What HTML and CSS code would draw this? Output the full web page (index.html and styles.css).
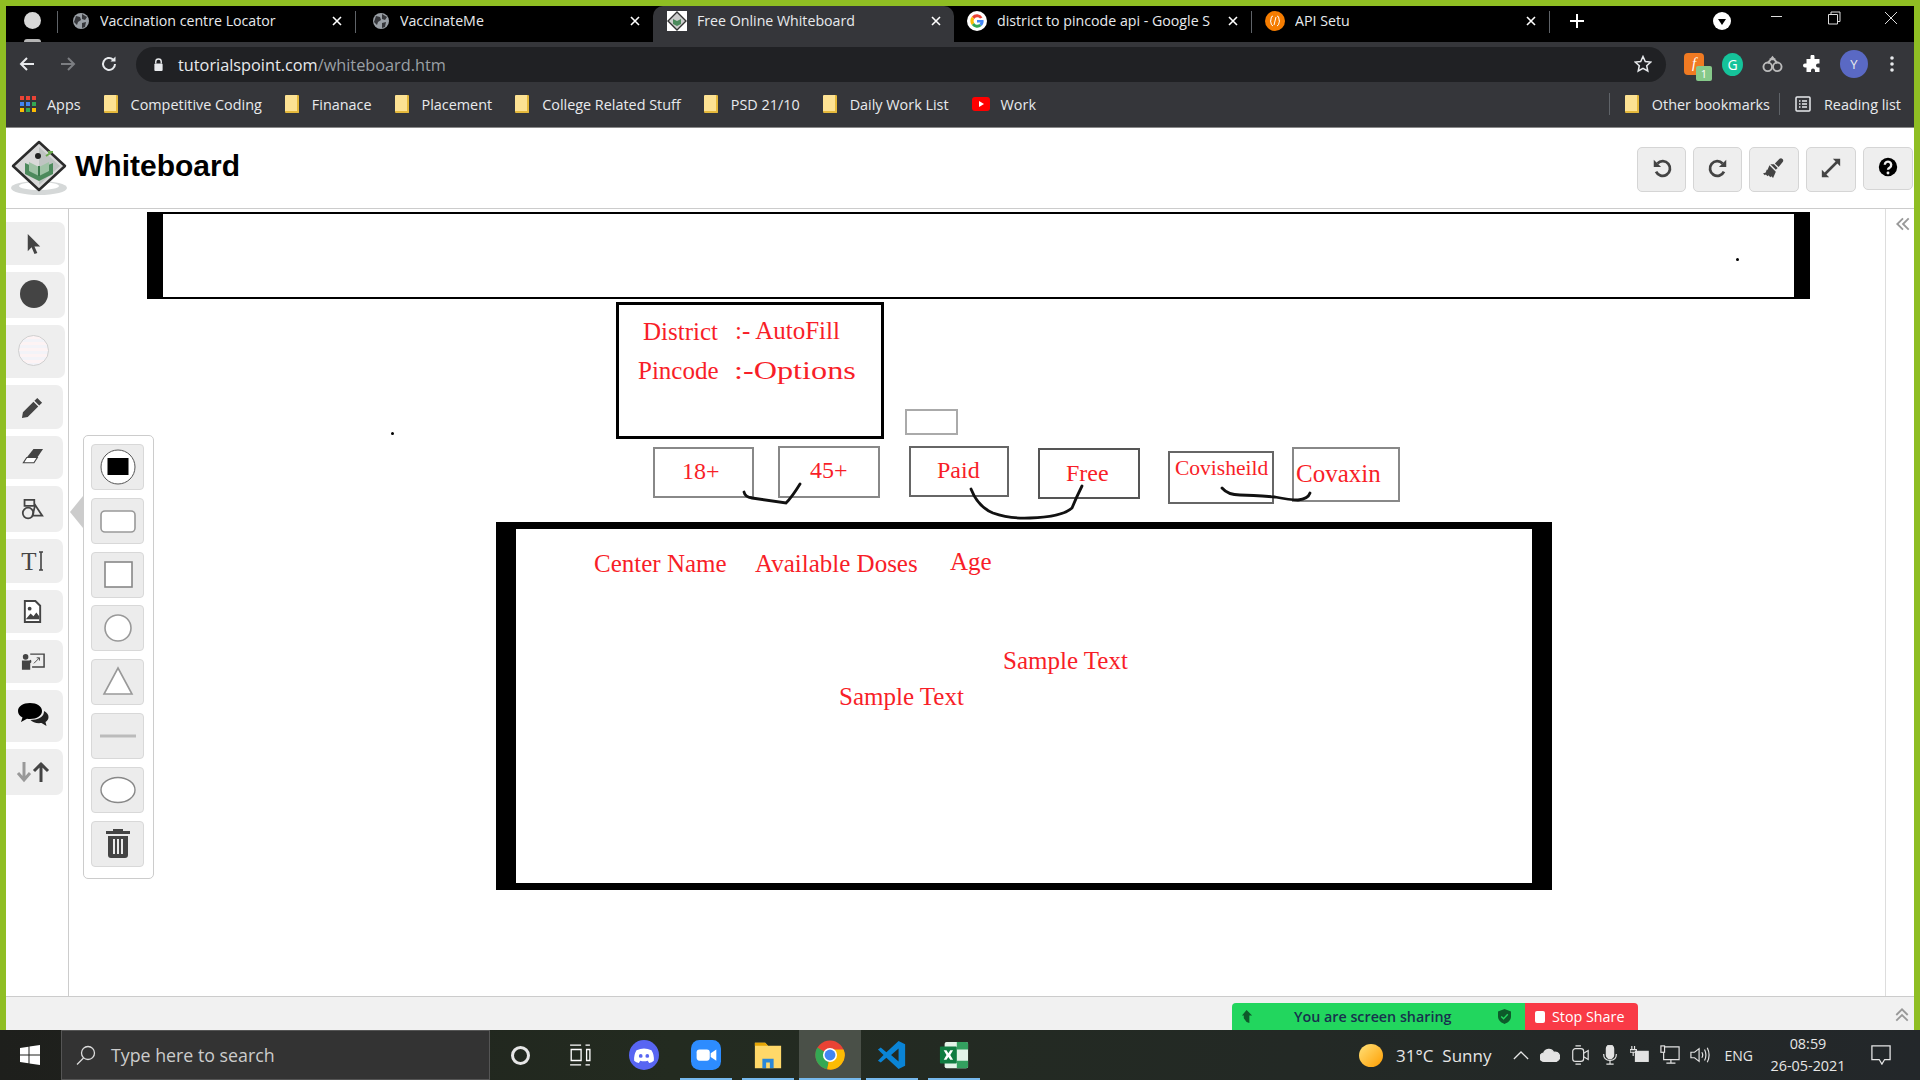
FILE: index.html
```html
<!DOCTYPE html>
<html>
<head>
	<meta charset="utf-8">
	<title>Free Online Whiteboard</title>
	<link rel="stylesheet" href="styles.css">
</head>
<body>
<div class="window">
	<!-- tab strip -->
	<div class="tabs">
		<div class="profile"><span class="prof-dot"></span><span class="prof-stub"></span></div>
		<div class="tab sep">
			<svg class="fav" viewBox="0 0 16 16"><circle cx="8" cy="8" r="8" fill="#9aa0a6"/><path d="M3 3l4 1 1 3-3 2-1 3-3-3zM9 1l5 3-2 3-3-1zM9 10l4-1-1 5-3 1z" fill="#35363a"/></svg>
			<span class="tab-title">Vaccination centre Locator</span>
			<svg class="tab-x" viewBox="0 0 10 10"><path d="M1 1l8 8M9 1l-8 8"/></svg>
		</div>
		<div class="tab sep pad-18">
			<svg class="fav" viewBox="0 0 16 16"><circle cx="8" cy="8" r="8" fill="#9aa0a6"/><path d="M3 3l4 1 1 3-3 2-1 3-3-3zM9 1l5 3-2 3-3-1zM9 10l4-1-1 5-3 1z" fill="#35363a"/></svg>
			<span class="tab-title">VaccinateMe</span>
			<svg class="tab-x" viewBox="0 0 10 10"><path d="M1 1l8 8M9 1l-8 8"/></svg>
		</div>
		<div class="tab active">
			<svg class="fav fav-big" viewBox="0 0 20 20"><rect width="20" height="20" fill="#fff"/><path d="M10 1l9 9-9 9-9-9z" fill="#ccc" stroke="#333" stroke-width="1.4"/><path d="M6 8l4 2 4-2v5l-4 2-4-2z" fill="#4c8a5c"/></svg>
			<span class="tab-title">Free Online Whiteboard</span>
			<svg class="tab-x" viewBox="0 0 10 10"><path d="M1 1l8 8M9 1l-8 8"/></svg>
		</div>
		<div class="tab narrow">
			<svg class="fav fav-big" viewBox="0 0 20 20"><circle cx="10" cy="10" r="10" fill="#fff"/><path d="M15.5 6.5A6.5 6.5 0 0 0 5 5.5L7.2 8A3.5 3.5 0 0 1 13 7.5z" fill="#ea4335"/><path d="M5 5.500A6.500 6.500 0 0 0 4.800 14L7.200 12A3.500 3.500 0 0 1 7.200 8z" fill="#fbbc05"/><path d="M4.800 14A6.500 6.500 0 0 0 14.500 15L12.500 13A3.500 3.500 0 0 1 7.200 12z" fill="#34a853"/><path d="M14.500 15A6.500 6.500 0 0 0 16.500 9H10V11.500H13.500A3.500 3.500 0 0 1 12.500 13z" fill="#4285f4"/></svg>
			<span class="tab-title">district to pincode api - Google S</span>
			<svg class="tab-x" viewBox="0 0 10 10"><path d="M1 1l8 8M9 1l-8 8"/></svg>
		</div>
		<div class="tab sep">
			<svg class="fav fav-big" viewBox="0 0 20 20"><circle cx="10" cy="10" r="10" fill="#f57c00"/><path d="M8 5Q6 5 6 8t-1 2q1 0 1 2t2 3M12 5q2 0 2 3t1 2q-1 0-1 2t-2 3M11 6l-2 8" fill="none" stroke="#fff" stroke-width="1"/></svg>
			<span class="tab-title">API Setu</span>
			<svg class="tab-x" viewBox="0 0 10 10"><path d="M1 1l8 8M9 1l-8 8"/></svg>
		</div>
		<div class="new-tab"><svg viewBox="0 0 14 14"><path d="M7 0v14M0 7h14"/></svg></div>
		<div class="win-ctrls">
			<svg class="win-down" viewBox="0 0 18 18"><circle cx="9" cy="9" r="9" fill="#fff"/><path d="M5 7h8l-4 6z" fill="#000"/></svg>
			<svg class="win-btn" viewBox="0 0 14 14"><path d="M1 5.500h11"/></svg>
			<svg class="win-btn" viewBox="0 0 14 14"><path d="M1.500 3.500h9v9.500h-9zM4 3.500V1h9v9.500h-2.500"/></svg>
			<svg class="win-btn" viewBox="0 0 14 14"><path d="M1 1l12 12M13 1L1 13"/></svg>
		</div>
	</div>

	<!-- address bar -->
	<div class="toolbar">
		<svg class="nav-ic" viewBox="0 0 18 18"><path d="M16 9H3M9 3L3 9l6 6"/></svg>
		<svg class="nav-ic dim" viewBox="0 0 18 18"><path d="M2 9h13M9 3l6 6-6 6"/></svg>
		<svg class="nav-ic" viewBox="0 0 18 18"><path d="M15 9a6 6 0 1 1-2-4.500"/><path class="solid" d="M15.500 1.500v5h-5z"/></svg>
		<div class="omnibox">
			<svg class="lock" viewBox="0 0 12 14"><path d="M3 6V4a3 3 0 0 1 6 0v2" fill="none" stroke="#e8eaed" stroke-width="1.500"/><rect x="1.500" y="6" width="9" height="8" rx="1" fill="#e8eaed"/></svg>
			<span class="url">tutorialspoint.com<span class="url-path">/whiteboard.htm</span></span>
			<svg class="star" viewBox="0 0 18 18"><path d="M9 1.500l2.300 5 5.400.6-4 3.600 1.100 5.300L9 13.300 4.200 16l1.100-5.300-4-3.600 5.400-.6z"/></svg>
		</div>
		<div class="exts">
			<div class="ext-f"><span class="ext-f-glyph">f</span><span class="ext-badge">1</span></div>
			<div class="ext-g">G</div>
			<svg class="ext-ic" viewBox="0 0 22 18"><circle cx="6" cy="12" r="4.500" fill="none" stroke="#bbb" stroke-width="2"/><circle cx="16" cy="12" r="4.500" fill="none" stroke="#bbb" stroke-width="2"/><path d="M6 8l5-6 5 6M8 4h6" fill="none" stroke="#bbb" stroke-width="2"/></svg>
			<svg class="ext-ic" viewBox="0 0 18 18"><path d="M7 1.500a2 2 0 0 1 4 0V4h5v4.500h-1.500a2 2 0 0 0 0 4H16V17h-4.500v-1.500a2 2 0 0 0-4 0V17H3v-4.500H1.500a2 2 0 0 1 0-4H3V4h4z" fill="#fff"/></svg>
			<div class="avatar">Y</div>
			<svg class="ext-dots" viewBox="0 0 4 18"><circle cx="2" cy="3" r="1.800"/><circle cx="2" cy="9" r="1.800"/><circle cx="2" cy="15" r="1.800"/></svg>
		</div>
	</div>

	<!-- bookmarks -->
	<div class="bookmarks">
		<div class="bm"><svg class="apps" viewBox="0 0 16 16"><path fill="#ea4335" d="M0 0h4v4H0zM6 0h4v4H6zM12 0h4v4h-4z"/><path fill="#4285f4" d="M0 6h4v4H0zM6 6h4v4H6z"/><path fill="#34a853" d="M12 6h4v4h-4zM6 12h4v4H6z"/><path fill="#fbbc05" d="M0 12h4v4H0zM12 12h4v4h-4z"/></svg>Apps</div>
		<div class="bm"><span class="folder"></span>Competitive Coding</div>
		<div class="bm"><span class="folder"></span>Finanace</div>
		<div class="bm"><span class="folder"></span>Placement</div>
		<div class="bm"><span class="folder"></span>College Related Stuff</div>
		<div class="bm"><span class="folder"></span>PSD 21/10</div>
		<div class="bm"><span class="folder"></span>Daily Work List</div>
		<div class="bm"><svg class="yt" viewBox="0 0 18 14"><rect width="18" height="14" rx="3" fill="#f00"/><path d="M7 4l5 3-5 3z" fill="#fff"/></svg>Work</div>
		<div class="bm-right">
			<div class="bm bm-div"><span class="folder"></span>Other bookmarks</div>
			<div class="bm bm-div"><svg class="reading" viewBox="0 0 16 16"><rect x="1" y="1" width="14" height="14" rx="1" fill="none" stroke="#e8eaed" stroke-width="1.500"/><path d="M4 5h1.500M7 5h5M4 8h1.500M7 8h5M4 11h1.500M7 11h5" stroke="#e8eaed" stroke-width="1.300"/></svg>Reading list</div>
		</div>
	</div>

	<!-- whiteboard app -->
	<div class="app-head">
		<svg class="logo" viewBox="0 0 58 58">
			<ellipse cx="29" cy="49" rx="28" ry="7" fill="#d5d8d8"/><ellipse cx="29" cy="47" rx="20" ry="4" fill="#fff"/>
			<path d="M29 3l26 24-26 24L3 27z" fill="#d9d9d9" stroke="#2c2c2c" stroke-width="2.500" stroke-linejoin="round"/>
			<path d="M29 8L50 27 29 46z" fill="#bfc4c2"/>
			<circle cx="28" cy="17" r="3" fill="#222"/>
			<path d="M15 24l14 6 14-6v11l-14 7-14-7z" fill="#4c8a5c"/><path d="M19 23l10 5 10-5v9l-10 5-10-5z" fill="#9fc3a6"/><path d="M29 27v10" stroke="#3b7a4c" stroke-width="2"/>
			<path d="M36 17l6-4M38 13h5" stroke="#6aa84f" stroke-width="2"/>
		</svg>
		<div class="app-title">Whiteboard</div>
		<div class="head-btns">
			<div class="hbtn"><svg class="hic" viewBox="0 0 24 24"><path class="ln" d="M7 7a8 8 0 1 1-1.500 9"/><path d="M3 3v8h8z"/></svg></div>
			<div class="hbtn"><svg class="hic" viewBox="0 0 24 24"><path class="ln" d="M17 7a8 8 0 1 0 1.500 9"/><path d="M21 3v8h-8z"/></svg></div>
			<div class="hbtn wide"><svg class="hic" viewBox="0 0 24 24"><path d="M18 2a2.500 2.500 0 0 1 3.500 3.500L17 11l-4-4zM12 8l4 4-2 2-6-6zM7 9l7 7-3 7-2-2-1 1-2-2-1 1-2-2-1 1-2-2 3-1 1-3 1 0z"/></svg></div>
			<div class="hbtn wide"><svg class="hic" viewBox="0 0 24 24"><path d="M14 2h8v8l-3-3L7 19l3 3H2v-8l3 3L17 5z"/></svg></div>
			<div class="hbtn wide short"><svg class="hic" viewBox="0 0 24 24"><circle cx="12" cy="12" r="10" fill="#000"/><path d="M8.500 9.500a3.500 3.500 0 1 1 5.500 3c-1.300.8-2 1.300-2 2.500" fill="none" stroke="#eee" stroke-width="2.600"/><circle cx="12" cy="18.500" r="1.600" fill="#eee"/></svg></div>
		</div>
	</div>

	<div class="app-body">
		<div class="side">
			<div class="sbtn h43 wider"><svg class="sic" viewBox="0 0 24 24"><path d="M6 2l13 13h-6l3 7-3 1-3-7-4 4z"/></svg></div>
			<div class="sbtn h46 wider"><span class="dot-dark"></span></div>
			<div class="sbtn h53 wider"><span class="dot-light"></span></div>
			<div class="sbtn h44"><svg class="sic" viewBox="0 0 24 24"><path d="M17 2l5 5-3 3-5-5zM13 6l5 5L7 22l-6 1 1-6z"/></svg></div>
			<div class="sbtn h43"><svg class="sic" viewBox="0 0 24 24"><path d="M13 3h10l-6 9H6z"/><path d="M6 12h11l-3.500 5.500H2.500z" fill="#fff" stroke="#444" stroke-width="1.200"/></svg></div>
			<div class="sbtn h46"><svg class="sic" viewBox="0 0 26 26"><g fill="none" stroke="#444" stroke-width="2"><path d="M4 2h11v7H4z"/><path d="M16 8l8 12H13z"/><circle cx="8" cy="17" r="6"/></g></svg></div>
			<div class="sbtn h44"><span class="t-tool">T</span><svg class="t-cursor" viewBox="0 0 6 20"><path d="M3 1v18M1 1h4M1 19h4" stroke="#444" stroke-width="1.600"/></svg></div>
			<div class="sbtn h43"><svg class="sic" viewBox="0 0 20 24"><path d="M2 1h11l5 5v17H2z" fill="#fff" stroke="#444" stroke-width="2"/><circle cx="7" cy="9" r="2" fill="#444"/><path d="M3 20l5-6 3 3 3-4 3 4v3z" fill="#444"/></svg></div>
			<div class="sbtn h43"><svg class="sic-board" viewBox="0 0 26 18"><circle cx="5" cy="4" r="3" fill="#444"/><path d="M1 8h8l4-2 1 2-4 3v7H1z" fill="#444"/><path d="M10 1h15v14H12" fill="#eee" stroke="#444" stroke-width="1.600"/><path d="M14 11l6-6M17 5h3v3" fill="none" stroke="#444"/></svg></div>
			<div class="sbtn h52"><svg class="sic-chat" viewBox="0 0 32 28"><path d="M13 1c7 0 12 3.500 12 8s-5 8-12 8c-1 0-2 0-3-.2L4 20l1.500-4.500C2.500 14 1 11.700 1 9c0-4.500 5-8 12-8z" fill="#000"/><path d="M27 9c3 1.500 4.500 3.500 4.500 6 0 2-1 3.800-3 5l1 4-5-3c-5 .5-9-.5-11-3 7 0 14-3 13.500-9z" fill="#222"/></svg></div>
			<div class="sbtn h46"><svg class="sic-wide" viewBox="0 0 34 22"><path d="M8 1v17M2 12l6 7 6-7" fill="none" stroke="#999" stroke-width="3"/><path d="M25 21V3M18 10l7-7 7 7" fill="none" stroke="#444" stroke-width="3"/></svg></div>
		</div>

		<div class="canvas">
			<div class="shape banner"></div>
			<span class="speck speck-a"></span>
			<span class="speck speck-b"></span>

			<div class="shape district"></div>
			<span class="ink txt-district">District</span>
			<span class="ink txt-autofill">:- AutoFill</span>
			<span class="ink txt-pincode">Pincode</span>
			<span class="ink txt-options">:-Options</span>

			<div class="shape small-box"></div>
			<div class="shape box-18"></div>
			<div class="shape box-45"></div>
			<div class="shape box-paid"></div>
			<div class="shape box-free"></div>
			<div class="shape box-covi"></div>
			<div class="shape box-cova"></div>
			<span class="ink txt-18">18+</span>
			<span class="ink txt-45">45+</span>
			<span class="ink txt-paid">Paid</span>
			<span class="ink txt-free">Free</span>
			<span class="ink txt-covi">Covisheild</span>
			<span class="ink txt-cova">Covaxin</span>

			<div class="shape results"></div>
			<span class="ink txt-center">Center Name</span>
			<span class="ink txt-doses">Available Doses</span>
			<span class="ink txt-age">Age</span>
			<span class="ink txt-sample1">Sample Text</span>
			<span class="ink txt-sample2">Sample Text</span>

			<svg class="scribbles" viewBox="69 209 1816 788">
				<path d="M744 492Q745 497 752 498T786 503Q792 497 800 484"/>
				<path d="M971 489Q978 507 993 513Q1010 519 1030 518Q1062 517 1072 508Q1076 498 1082 486"/>
				<path d="M1222 488Q1228 495 1240 495T1275 497Q1290 500 1298 500Q1308 499 1310 493"/>
			</svg>

			<!-- shape picker -->
			<div class="picker-arrow"></div>
			<div class="picker">
				<div class="pbtn"><svg class="pic" viewBox="0 0 36 36"><circle cx="18" cy="18" r="17" fill="#fff" stroke="#555"/><rect x="7.500" y="9" width="21" height="17" fill="#000"/></svg></div>
				<div class="pbtn"><svg class="pic" viewBox="0 0 36 36"><rect x="1" y="8" width="34" height="21" rx="4" fill="#fff" stroke="#999" stroke-width="1.600"/></svg></div>
				<div class="pbtn"><svg class="pic" viewBox="0 0 36 36"><rect x="5" y="5" width="27" height="25" fill="#fff" stroke="#888" stroke-width="1.600"/></svg></div>
				<div class="pbtn"><svg class="pic" viewBox="0 0 36 36"><circle cx="18" cy="18" r="13" fill="#fff" stroke="#999" stroke-width="1.600"/></svg></div>
				<div class="pbtn"><svg class="pic" viewBox="0 0 36 36"><path d="M18 4l14 26H4z" fill="#fff" stroke="#999" stroke-width="1.600"/></svg></div>
				<div class="pbtn"><svg class="pic" viewBox="0 0 36 36"><path d="M0 18h36" stroke="#bbb" stroke-width="3"/></svg></div>
				<div class="pbtn"><svg class="pic" viewBox="0 0 36 36"><ellipse cx="18" cy="18" rx="17" ry="12.500" fill="#fff" stroke="#888" stroke-width="1.400"/></svg></div>
				<div class="pbtn"><svg class="pic" viewBox="0 0 36 36"><path d="M13 5V3h10v2h7v3H6V5zM8 10h20v19q0 3-3 3H11q-3 0-3-3zM13 13v15h2V13zM17 13v15h2V13zM21 13v15h2V13z" fill="#444" fill-rule="evenodd"/></svg></div>
			</div>
		</div>

		<div class="collapse-side"><svg class="chev" viewBox="0 0 14 14"><path d="M7 2L2 7l5 5M12 2L7 7l5 5"/></svg></div>
	</div>

	<div class="app-foot">
		<div class="share">
			<div class="share-green">
				<svg class="share-arrow" viewBox="0 0 14 14"><path d="M6 0l6 6H9v8l-3-1-3-4V6H1z"/></svg>
				<span class="share-text">You are screen sharing</span>
				<svg class="share-shield" viewBox="0 0 14 16"><path d="M7 0l7 2.500V8c0 4-3 6.500-7 8-4-1.500-7-4-7-8V2.500z"/><path d="M3.500 8l2.500 2.500 4.500-5" fill="none" stroke="#22d65e" stroke-width="1.500"/></svg>
			</div>
			<div class="share-red"><span class="stop-sq"></span>Stop Share</div>
		</div>
		<svg class="chev foot-chev" viewBox="0 0 14 14"><path d="M2 7l5-5 5 5M2 12l5-5 5 5"/></svg>
	</div>
</div>

<!-- windows taskbar -->
<div class="taskbar">
	<div class="start"><svg viewBox="0 0 20 20"><path d="M0 3l8.500-1.300V9.500H0zM9.500 1.500L20 0v9.500H9.500zM0 10.500h8.500v7.800L0 17zM9.500 10.500H20V20l-10.500-1.500z" fill="#fff"/></svg></div>
	<div class="search">
		<svg class="search-ic" viewBox="0 0 20 20"><circle cx="12" cy="8" r="6.500"/><path d="M7.500 13L1 19.500"/></svg>
		<span>Type here to search</span>
	</div>
	<div class="tb-cell sys"><span class="cortana"></span></div>
	<div class="tb-cell sys"><svg class="taskview" viewBox="0 0 20 20"><path d="M1 1h10M1 19h10M2 5h9v10H2zM15 1h4M15 19h4M16 5h3v10h-3z" fill="none" stroke="#fff" stroke-width="1.200"/></svg></div>
	<div class="tb-cell"><svg class="app-ic" viewBox="0 0 32 32"><circle cx="16" cy="16" r="16" fill="#5865f2"/><path d="M8 11q8-4 16 0 3 5 2.500 11-2 2-5 2.500l-1.500-2.500q-4 1.500-8 0L10.500 24.500q-3-.5-5-2.500Q5 16 8 11z" fill="#fff"/><circle cx="12.500" cy="17" r="2" fill="#5865f2"/><circle cx="19.500" cy="17" r="2" fill="#5865f2"/></svg></div>
	<div class="tb-cell run"><svg class="app-ic" viewBox="0 0 32 32"><rect width="32" height="32" rx="9" fill="#2d8cff"/><rect x="6" y="10" width="14" height="12" rx="3" fill="#fff"/><path d="M21 14l6-4v12l-6-4z" fill="#fff"/></svg></div>
	<div class="tb-cell run"><svg class="app-ic" viewBox="0 0 32 32"><path d="M2 3h11l3 3h14v24H2z" fill="#ffd869"/><path d="M2 3h11l3 3H2z" fill="#e5a505"/><path d="M10 20h12v10H10z" fill="#2b88d8"/><path d="M14 24h4v6h-4z" fill="#ffd869"/></svg></div>
	<div class="tb-cell run open"><svg class="app-ic" viewBox="0 0 32 32"><circle cx="16" cy="16" r="15.500" fill="#ea4335"/><path d="M16 16L2.500 8A15.500 15.500 0 0 0 13 31.200z" fill="#34a853"/><path d="M16 16l-3 15.200A15.500 15.500 0 0 0 30.500 10H16z" fill="#fbbc05"/><circle cx="16" cy="16" r="7.500" fill="#fff"/><circle cx="16" cy="16" r="5.800" fill="#4285f4"/></svg></div>
	<div class="tb-cell run"><svg class="app-ic" viewBox="0 0 32 32"><path d="M23 1l7 3.500v23L23 31 10 19l-6 5-3-2 6-6-6-6 3-2 6 5zM23 9l-8 7 8 7z" fill="#0a84d6" fill-rule="evenodd"/></svg></div>
	<div class="tb-cell run"><svg class="app-ic" viewBox="0 0 32 32"><rect x="6" y="2" width="25" height="28" rx="2" fill="#e3f3e8"/><path d="M19 2h10q2 0 2 2v6H19zM19 22h12v6q0 2-2 2H19z" fill="#33a05f"/><rect x="1" y="7" width="18" height="18" rx="1" fill="#107c41"/><path d="M5 11l3 5-3 5h3l2-3 2 3h3l-3-5 3-5h-3l-2 3-2-3z" fill="#fff"/></svg></div>

	<div class="tray">
		<span class="sun"></span>
		<span class="weather">31°C&nbsp; Sunny</span>
		<svg class="tray-up" viewBox="0 0 18 10"><path d="M1 9l8-8 8 8"/></svg>
		<svg class="tray-ic" viewBox="0 0 22 16"><path d="M5 15a4.500 4.500 0 0 1-1-9 6 6 0 0 1 11-1 5 5 0 0 1 3 10z" fill="#e3e3e3"/></svg>
		<svg class="tray-ic" viewBox="0 0 22 22"><rect x="3" y="4" width="12" height="14" rx="3"/><path d="M15 9l5-3v10l-5-3M6 1h6M6 21h6"/></svg>
		<svg class="tray-ic" viewBox="0 0 22 22"><rect x="7" y="0" width="8" height="15" rx="4" fill="#e3e3e3"/><path d="M4 10q0 7 7 7t7-7M11 17v4M7 21h8"/></svg>
		<svg class="tray-ic" viewBox="0 0 22 22"><path d="M2 1v4M5 1v4M0 5h7v3H0zM3.500 8v4"/><rect x="6" y="7" width="14" height="11" fill="#e3e3e3"/></svg>
		<svg class="tray-ic" viewBox="0 0 22 22"><path d="M4 2h17v14H4zM12 16v4M7 20h10"/><rect x="1" y="1" width="4" height="7" fill="#222"/></svg>
		<svg class="tray-ic" viewBox="0 0 22 22"><path d="M1 8h4l5-4v14l-5-4H1zM13 8q2 3 0 6M16 5q3 6 0 12M19 3q4 8 0 16"/></svg>
		<span class="lang">ENG</span>
		<div class="clock"><span>08:59</span><span>26-05-2021</span></div>
		<svg class="notif" viewBox="0 0 22 22"><path d="M1 1h20v15h-6l-3 5-3-5H1z"/></svg>
	</div>
</div>
</body>
</html>
```

FILE: styles.css
```css
* {
	box-sizing: border-box;
}
html, body {
	margin: 0;
	height: 1080px;
	overflow: hidden;
}
body {
	font-family: "Open Sans", "Liberation Sans", sans-serif;
	display: flex;
	flex-direction: column;
	background: #000;
}
svg {
	display: block;
	flex: none;
}

.window {
	flex: 1;
	min-height: 0;
	display: flex;
	flex-direction: column;
	padding: 6px 6px 0;
	background: #8fbe23;
}

/* tab strip */
.tabs {
	height: 36px;
	display: flex;
	background: #000;
	color: #e8eaed;
	font-size: 14.2px;
	flex: none;
}
.profile {
	width: 51px;
	flex: none;
	position: relative;
}
.prof-dot {
	position: absolute;
	left: 18px;
	top: 6px;
	width: 17px;
	height: 17px;
	border-radius: 50%;
	background: #d8d8d8;
}
.prof-stub {
	position: absolute;
	left: 18px;
	bottom: 0;
	width: 17px;
	height: 3px;
	border-radius: 3px 3px 0 0;
	background: #b5b5b5;
}
.tab {
	width: 298px;
	flex: none;
	display: flex;
	align-items: center;
	padding: 0 13px 7px 16px;
	position: relative;
}
.tab.pad-18 {
	padding-left: 18px;
}
.tab.sep::before {
	content: "";
	position: absolute;
	left: 0;
	top: 5px;
	height: 22px;
	border-left: 1px solid #5f6368;
}
.tab.active {
	width: 301px;
	background: #35363a;
	border-radius: 10px 10px 0 0;
}
.tab.narrow {
	width: 297px;
	padding-left: 15px;
}
.fav {
	width: 16px;
	height: 16px;
	margin-right: 11px;
}
.fav-big {
	width: 20px;
	height: 20px;
	margin-left: -2px;
	margin-right: 10px;
}
.tab-title {
	flex: 1;
	white-space: nowrap;
	overflow: hidden;
}
.tab-x {
	width: 10px;
	height: 10px;
	margin-left: 8px;
	stroke: #fff;
	stroke-width: 1.6;
}
.new-tab {
	width: 56px;
	flex: none;
	display: flex;
	align-items: center;
	justify-content: center;
	position: relative;
	padding-bottom: 6px;
}
.new-tab::before {
	content: "";
	position: absolute;
	left: 0;
	top: 5px;
	height: 22px;
	border-left: 1px solid #5f6368;
}
.new-tab svg {
	width: 14px;
	height: 14px;
	stroke: #fff;
	stroke-width: 2;
}
.win-ctrls {
	display: flex;
	align-items: center;
	margin-left: 108px;
	padding-bottom: 6px;
}
.win-down {
	width: 18px;
	height: 18px;
	margin-right: 39px;
}
.win-btn {
	width: 14px;
	height: 14px;
	margin-right: 43px;
	margin-top: -6px;
	stroke: #ddd;
	fill: none;
	stroke-width: 1;
}
.win-btn:last-child {
	margin-right: 0;
}

/* address bar */
.toolbar {
	height: 44px;
	flex: none;
	display: flex;
	align-items: center;
	background: #35363a;
	padding-left: 12px;
}
.nav-ic {
	width: 18px;
	height: 18px;
	margin-right: 23px;
	fill: none;
	stroke: #e8eaed;
	stroke-width: 2;
}
.nav-ic.dim {
	stroke: #7c7e82;
}
.nav-ic .solid {
	fill: #e8eaed;
	stroke: none;
}
.nav-ic:nth-child(3) {
	margin-right: 18px;
}
.omnibox {
	width: 1530px;
	height: 35px;
	flex: none;
	display: flex;
	align-items: center;
	background: #202124;
	border-radius: 18px;
	padding: 0 14px 0 17px;
}
.lock {
	width: 11px;
	height: 13px;
	margin-right: 14px;
}
.url {
	flex: 1;
	font-size: 16.3px;
	color: #e8eaed;
	white-space: nowrap;
	padding-top: 1px;
}
.url-path {
	color: #9aa0a6;
}
.star {
	width: 18px;
	height: 18px;
	fill: none;
	stroke: #e8eaed;
	stroke-width: 1.500;
}
.exts {
	display: flex;
	align-items: center;
	padding-left: 18px;
}
.ext-f {
	width: 20px;
	height: 22px;
	background: #f07a22;
	border-radius: 4px;
	position: relative;
	text-align: center;
	color: #fff;
	font-family: "Liberation Serif", serif;
	font-style: italic;
	font-size: 15px;
	line-height: 20px;
}
.ext-badge {
	position: absolute;
	left: 12px;
	top: 13px;
	width: 16px;
	height: 15px;
	background: #86c98a;
	border-radius: 2px;
	color: #fff;
	font: 11px/15px "Open Sans", sans-serif;
}
.ext-g {
	width: 21px;
	height: 23px;
	border-radius: 50%;
	margin-left: 18px;
	background: #15c39a;
	color: #fff;
	font-size: 14px;
	line-height: 23px;
	text-align: center;
}
.ext-ic {
	width: 21px;
	height: 18px;
	margin-left: 19px;
}
.avatar {
	width: 28px;
	height: 28px;
	border-radius: 50%;
	margin-left: 17px;
	background: #5a69c4;
	color: #e8eaed;
	font-size: 13px;
	line-height: 28px;
	text-align: center;
}
.ext-dots {
	width: 4px;
	height: 18px;
	margin-left: 22px;
	fill: #e8eaed;
}

/* bookmarks */
.bookmarks {
	height: 42px;
	flex: none;
	display: flex;
	align-items: center;
	gap: 23px;
	padding: 0 0 5px 14px;
	background: #35363a;
	border-bottom: 1px solid #8a8a8a;
	color: #e8eaed;
	font-size: 14.4px;
}
.bm {
	display: flex;
	align-items: center;
	white-space: nowrap;
}
.apps {
	width: 16px;
	height: 16px;
	margin-right: 11px;
}
.folder {
	width: 14px;
	height: 18px;
	margin-right: 13px;
	background: #fde293;
	border-right: 2px solid #e5b93c;
	border-bottom: 2px solid #e5b93c;
	border-radius: 1px;
}
.yt {
	width: 18px;
	height: 14px;
	margin-right: 11px;
}
.bm-right {
	margin-left: auto;
	display: flex;
	padding-right: 13px;
}
.bm-div {
	border-left: 1px solid #5f6368;
	height: 22px;
	padding-left: 15px;
}
.bm-div + .bm-div {
	margin-left: 9px;
}
.reading {
	width: 16px;
	height: 16px;
	margin-right: 13px;
}

/* app header */
.app-head {
	height: 81px;
	flex: none;
	display: flex;
	align-items: center;
	background: #fff;
	border-bottom: 1px solid #ccc;
	padding-left: 4px;
}
.logo {
	width: 58px;
	height: 58px;
}
.app-title {
	font-family: "Liberation Sans", sans-serif;
	font-weight: bold;
	font-size: 30px;
	margin-left: 7px;
	margin-top: -4px;
	color: #000;
}
.head-btns {
	margin-left: auto;
	display: flex;
	align-items: flex-start;
	gap: 7px;
	padding-top: 19px;
	align-self: flex-start;
	padding-right: 1px;
}
.hbtn {
	width: 49px;
	height: 45px;
	display: flex;
	align-items: center;
	justify-content: center;
	background: #eee;
	border: 1px solid #d5d5d5;
	border-radius: 5px;
	padding-bottom: 4px;
}
.hbtn.wide {
	width: 50px;
}
.hbtn.short {
	height: 43px;
}
.hic {
	width: 22px;
	height: 22px;
	fill: #444;
}
.hic .ln {
	fill: none;
	stroke: #444;
	stroke-width: 3;
}

/* main area */
.app-body {
	flex: 1;
	min-height: 0;
	display: flex;
	background: #fff;
	border-bottom: 1px solid #ccc;
}
.side {
	width: 63px;
	flex: none;
	display: flex;
	flex-direction: column;
	align-items: flex-start;
	gap: 7px;
	padding-top: 13px;
	border-right: 1px solid #ccc;
}
.sbtn {
	width: 57px;
	display: flex;
	align-items: center;
	justify-content: center;
	background: #eee;
	border-radius: 0 7px 7px 0;
	padding-right: 4px;
}
.sbtn.wider {
	width: 59px;
}
.h43 { height: 43px; }
.h44 { height: 44px; }
.h46 { height: 46px; }
.h52 { height: 52px; }
.h53 { height: 53px; }
.sic {
	width: 23px;
	height: 23px;
	fill: #444;
}
.sic-wide {
	width: 34px;
	height: 22px;
}
.sic-board {
	width: 24px;
	height: 17px;
}
.sic-chat {
	width: 32px;
	height: 28px;
}
.dot-dark {
	width: 28px;
	height: 28px;
	border-radius: 50%;
	background: #444;
	margin-top: -2px;
}
.dot-light {
	width: 31px;
	height: 31px;
	border-radius: 50%;
	background: repeating-linear-gradient(#fdf3f4 0 3px, #f3f3f8 3px 6px);
	border: 1px solid #d0d0d0;
	margin-top: -2px;
}
.t-tool {
	font-family: "Liberation Serif", serif;
	font-size: 25px;
	color: #444;
	line-height: 1;
}
.t-cursor {
	width: 6px;
	height: 20px;
	margin-left: 1px;
}

/* whiteboard drawing, a free canvas: everything sits at its drawn spot */
.canvas {
	flex: 1;
	position: relative;
	overflow: hidden;
}
.shape {
	position: absolute;
	border: 2px solid #777;
	background: #fff;
}
.banner {
	left: 78px;
	top: 3px;
	width: 1663px;
	height: 87px;
	border: solid #000;
	border-width: 2px 16px;
}
.speck {
	position: absolute;
	width: 3px;
	height: 3px;
	background: #000;
	border-radius: 50%;
}
.speck-a { left: 1667px; top: 49px; }
.speck-b { left: 322px; top: 223px; }
.district {
	left: 547px;
	top: 93px;
	width: 268px;
	height: 137px;
	border: 3px solid #000;
}
.small-box { left: 836px; top: 200px; width: 53px; height: 26px; border-color: #aaa; }
.box-18 { left: 584px; top: 238px; width: 101px; height: 51px; border-color: #888; }
.box-45 { left: 709px; top: 237px; width: 102px; height: 52px; border-color: #888; }
.box-paid { left: 840px; top: 237px; width: 100px; height: 51px; border-color: #666; }
.box-free { left: 969px; top: 239px; width: 102px; height: 51px; border-color: #555; }
.box-covi { left: 1099px; top: 242px; width: 106px; height: 53px; border-color: #666; }
.box-cova { left: 1223px; top: 238px; width: 108px; height: 55px; border-color: #888; }
.results {
	left: 427px;
	top: 313px;
	width: 1056px;
	height: 368px;
	border: solid #000;
	border-width: 7px 20px;
}
.ink {
	position: absolute;
	font-family: "Liberation Serif", serif;
	font-size: 25px;
	line-height: 30px;
	color: #f81e28;
	white-space: nowrap;
}
.txt-district { left: 574px; top: 108px; }
.txt-autofill { left: 666px; top: 107px; }
.txt-pincode { left: 569px; top: 147px; }
.txt-options { left: 665px; top: 147px; transform: scaleX(1.29); transform-origin: left; }
.txt-18 { left: 613px; top: 247px; font-size: 24px; }
.txt-45 { left: 741px; top: 246px; font-size: 24px; }
.txt-paid { left: 868px; top: 246px; font-size: 24px; }
.txt-free { left: 997px; top: 249px; font-size: 24px; }
.txt-covi { left: 1106px; top: 244px; font-size: 21.5px; }
.txt-cova { left: 1227px; top: 250px; font-size: 25px; }
.txt-center { left: 525px; top: 340px; }
.txt-doses { left: 686px; top: 340px; }
.txt-age { left: 881px; top: 338px; }
.txt-sample1 { left: 934px; top: 437px; }
.txt-sample2 { left: 770px; top: 473px; }
.scribbles {
	position: absolute;
	left: 0;
	top: 0;
	width: 1816px;
	height: 788px;
	fill: none;
	stroke: #111;
	stroke-width: 2.800;
	stroke-linecap: round;
}
.picker {
	position: absolute;
	left: 14px;
	top: 226px;
	width: 71px;
	height: 444px;
	display: flex;
	flex-direction: column;
	gap: 7.800px;
	padding: 8px 9px 8px 7px;
	background: #fff;
	border: 1px solid #ccc;
	border-radius: 5px;
}
.picker-arrow {
	position: absolute;
	left: 1px;
	top: 287px;
	border-style: solid;
	border-width: 16px 13px 16px 0;
	border-color: transparent #ccc transparent transparent;
}
.pbtn {
	height: 46px;
	flex: none;
	display: flex;
	align-items: center;
	justify-content: center;
	background: #ececec;
	border: 1px solid #d8d8d8;
	border-radius: 4px;
}
.pic {
	width: 36px;
	height: 36px;
}
.collapse-side {
	width: 29px;
	flex: none;
	border-left: 1px solid #ddd;
	padding: 7px 0 0 9px;
}
.chev {
	width: 16px;
	height: 16px;
	fill: none;
	stroke: #999;
	stroke-width: 1.600;
}

.app-foot {
	flex: none;
	height: 33px;
	display: flex;
	align-items: flex-end;
	background: #f1f1f1;
}
.share {
	margin-left: 1226px;
	height: 27px;
	display: flex;
	font-size: 14.3px;
	font-weight: 600;
}
.share-green {
	width: 293px;
	display: flex;
	align-items: center;
	background: #22d65e;
	border-radius: 4px 0 0 0;
	color: #17324d;
	padding-left: 9px;
}
.share-arrow {
	width: 13px;
	height: 13px;
	fill: #0d5a2a;
	margin-right: 40px;
}
.share-text {
	flex: 1;
	white-space: nowrap;
}
.share-shield {
	width: 13px;
	height: 15px;
	fill: #0d5a2a;
	margin-right: 14px;
}
.share-red {
	width: 113px;
	display: flex;
	align-items: center;
	background: #f93a46;
	color: #fff;
	border-radius: 0 4px 0 0;
	padding-left: 10px;
	font-weight: 400;
}
.stop-sq {
	width: 10px;
	height: 12px;
	background: #fff;
	border-radius: 2px;
	margin-right: 7px;
}
.foot-chev {
	margin-left: auto;
	margin-right: 4px;
	margin-bottom: 7px;
}

/* windows taskbar */
.taskbar {
	height: 50px;
	flex: none;
	display: flex;
	background: linear-gradient(90deg, #1e1f1c, #232b20 35%, #23272a);
	color: #e6e6e6;
}
.start {
	width: 61px;
	flex: none;
	display: flex;
	align-items: center;
	padding-left: 20px;
}
.start svg {
	width: 20px;
	height: 20px;
}
.search {
	width: 429px;
	flex: none;
	display: flex;
	align-items: center;
	background: #333;
	border: 1px solid #555;
	padding-left: 14px;
	font-size: 17.800px;
	color: #ccc;
}
.search-ic {
	width: 20px;
	height: 20px;
	fill: none;
	stroke: #ddd;
	stroke-width: 1.300;
	margin-right: 15px;
}
.tb-cell {
	width: 62px;
	flex: none;
	display: flex;
	align-items: center;
	justify-content: center;
	position: relative;
}
.tb-cell.sys {
	width: 60px;
}
.tb-cell.sys + .tb-cell:not(.sys) {
	margin-left: 3px;
}
.tb-cell.run::after {
	content: "";
	position: absolute;
	left: 5px;
	right: 5px;
	bottom: 0;
	height: 2px;
	background: #76b9ed;
}
.tb-cell.open {
	background: #4a5048;
}
.tb-cell.open::after {
	left: 0;
	right: 0;
}
.cortana {
	width: 19px;
	height: 19px;
	border: 3px solid #e6e6e6;
	border-radius: 50%;
}
.taskview {
	width: 22px;
	height: 22px;
}
.app-ic {
	width: 30px;
	height: 30px;
}
.tray {
	margin-left: auto;
	display: flex;
	align-items: center;
	padding-right: 29px;
}
.sun {
	width: 24px;
	height: 23px;
	border-radius: 50%;
	background: linear-gradient(135deg, #ffe27a, #ff9d00);
	margin-right: 13px;
}
.weather {
	font-size: 17px;
	margin-right: 21px;
}
.tray-up {
	width: 16px;
	height: 9px;
	fill: none;
	stroke: #e6e6e6;
	stroke-width: 1.400;
	margin-right: 11px;
}
.tray-ic {
	width: 20px;
	height: 20px;
	margin-right: 10px;
	fill: none;
	stroke: #e3e3e3;
	stroke-width: 1.300;
}
.lang {
	font-size: 14px;
	margin: 0 8px 0 5px;
}
.clock {
	width: 94px;
	display: flex;
	flex-direction: column;
	align-items: center;
	gap: 6px;
	font-size: 14.4px;
	line-height: 16px;
	margin-right: 16px;
	padding-bottom: 1px;
}
.notif {
	width: 20px;
	height: 20px;
	fill: none;
	stroke: #e6e6e6;
	stroke-width: 1.400;
}
```
